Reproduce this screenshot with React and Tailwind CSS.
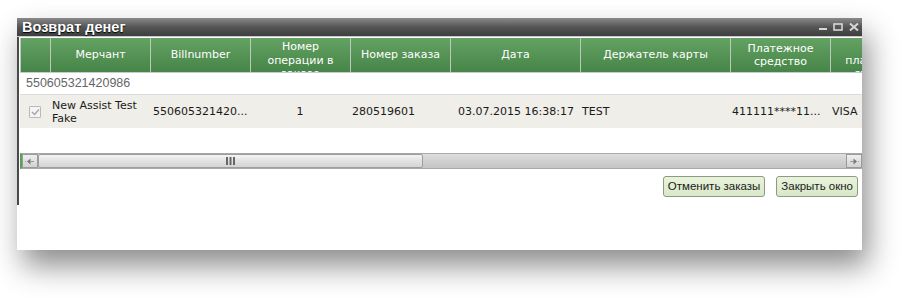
import React from 'react';

const cols = [
  { w: 30, label: '' },
  { w: 100, label: 'Мерчант' },
  { w: 100, label: 'Billnumber' },
  { w: 100, label: 'Номер операции в заказе', tall: true },
  { w: 100, label: 'Номер заказа' },
  { w: 130, label: 'Дата' },
  { w: 150, label: 'Держатель карты' },
  { w: 100, label: 'Платежное средство' },
  { w: 100, label: 'Тип платежного средства', tall: true },
];

function WindowControls() {
  return (
    <div className="flex items-end gap-[6px] pr-[3px] pb-[5px]">
      <svg width="8" height="3" viewBox="0 0 8 3">
        <rect x="0" y="0" width="8" height="2" fill="#d6d6d6" />
      </svg>
      <svg width="10" height="8" viewBox="0 0 10 8">
        <rect x="1" y="1" width="8" height="6" fill="none" stroke="#d6d6d6" strokeWidth="1.6" />
      </svg>
      <svg width="10" height="8" viewBox="0 0 10 8">
        <path d="M1 0.5 L9 7.5 M9 0.5 L1 7.5" stroke="#d6d6d6" strokeWidth="2" />
      </svg>
    </div>
  );
}

function Checkbox() {
  return (
    <div className="w-[12px] h-[12px] border border-[#b9b9b9] bg-[#f4f4f4] rounded-[1px] flex items-center justify-center">
      <svg width="9" height="8" viewBox="0 0 9 8">
        <path d="M1 4 L3.5 6.5 L8 1.5" fill="none" stroke="#a8a8a8" strokeWidth="1.5" />
      </svg>
    </div>
  );
}

function ScrollArrow({ dir }) {
  return (
    <div className="w-[16px] h-[14px] border border-[#9a9a9a] bg-gradient-to-b from-[#efefef] to-[#d2d2d2] flex items-center justify-center">
      <svg width="10" height="7" viewBox="0 0 10 7">
        {dir === 'left' ? (
          <>
            <path d="M2 3.5 L5.5 0.5 L5.5 6.5 Z" fill="#777" />
            <rect x="5" y="3" width="4" height="1" fill="#999" />
            <rect x="0" y="3" width="1" height="1" fill="#999" />
          </>
        ) : (
          <>
            <path d="M8 3.5 L4.5 0.5 L4.5 6.5 Z" fill="#777" />
            <rect x="1" y="3" width="4" height="1" fill="#999" />
            <rect x="9" y="3" width="1" height="1" fill="#999" />
          </>
        )}
      </svg>
    </div>
  );
}

export default function App() {
  const font = { fontFamily: '"DejaVu Sans", Verdana, sans-serif' };
  const btn =
    'h-[21px] px-[4px] text-[11.5px] text-[#1a1a1a] bg-gradient-to-b from-[#e9f3dc] to-[#d9e8c8] border border-[#8d9a82] rounded-[3px]';

  return (
    <div className="w-[910px] h-[298px] bg-white overflow-hidden pt-[18px] pl-[17px]">
      <div className="w-[845px] h-[232px] bg-white flex flex-col shadow-[6px_16px_28px_rgba(0,0,0,0.45)]">
        {/* Title bar */}
        <div className="h-[19px] flex items-stretch justify-between bg-gradient-to-b from-[#8a8a8a] via-[#555555] to-[#3e3e3e] border-b border-[#c9c9c9]">
          <div
            className="pl-[5px] text-white font-bold text-[14.5px] leading-[19px] [text-shadow:0_1px_1px_#000]"
            style={{ fontFamily: '"Liberation Sans", Arial, sans-serif' }}
          >
            Возврат денег
          </div>
          <WindowControls />
        </div>

        {/* Body */}
        <div className="flex flex-1">
          <div className="w-[2px] h-[168px] bg-[#4a4a4a]" />
          <div className="flex-1 flex flex-col min-w-0 pt-[1px] pl-[1px]">
            {/* Grid */}
            <div className="overflow-hidden">
              <div className="w-max" style={font}>
                {/* Header */}
                <div className="flex h-[35px] bg-gradient-to-b from-[#64a264] to-[#478447] border-b border-[#c2ccd2]">
                  {cols.map((c, i) => (
                    <div
                      key={i}
                      className={`shrink-0 border-l border-[#bcc8bc] flex justify-center text-center text-white text-[11px] leading-[13.5px] px-[4px] overflow-hidden ${c.tall ? 'items-start pt-[2px]' : 'items-center'}`}
                      style={{ width: c.w }}
                    >
                      {c.label}
                    </div>
                  ))}
                </div>

                {/* Group row */}
                <div className="h-[22px] flex items-center pl-[6px] border-b border-[#dcdcdc] text-[#666666] text-[12.5px]" style={{ fontFamily: '"Liberation Sans", Arial, sans-serif' }}>
                  550605321420986
                </div>

                {/* Data row */}
                <div className="flex h-[33px] bg-[#efeee8] text-[11px] leading-[13px] text-[#1a1a1a]">
                  <div className="w-[30px] shrink-0 flex items-center justify-center">
                    <Checkbox />
                  </div>
                  <div className="w-[100px] shrink-0 flex items-center pl-[2px]">
                    <span>
                      New Assist Test
                      <br />
                      Fake
                    </span>
                  </div>
                  <div className="w-[100px] shrink-0 flex items-center pl-[3px]">550605321420...</div>
                  <div className="w-[100px] shrink-0 flex items-center justify-center">1</div>
                  <div className="w-[100px] shrink-0 flex items-center pl-[2px]">280519601</div>
                  <div className="w-[130px] shrink-0 flex items-center pl-[8px] whitespace-nowrap">03.07.2015 16:38:17</div>
                  <div className="w-[150px] shrink-0 flex items-center pl-[2px]">TEST</div>
                  <div className="w-[100px] shrink-0 flex items-center pl-[2px]">411111****11...</div>
                  <div className="w-[100px] shrink-0 flex items-center pl-[2px]">VISA</div>
                </div>

                <div className="h-[25px]" />
              </div>
            </div>

            {/* Horizontal scrollbar */}
            <div className="h-[16px] flex items-center border-y border-[#a8a8a8] bg-gradient-to-b from-[#dedede] via-[#d0d0d0] to-[#c4c4c4] border-l-2 border-l-[#5aa05a]">
              <ScrollArrow dir="left" />
              <div className="w-[385px] h-[14px] border border-[#9e9e9e] rounded-[2px] bg-gradient-to-b from-[#f4f4f4] via-[#e2e2e2] to-[#d4d4d4] flex items-center justify-center">
                <svg width="9" height="8" viewBox="0 0 9 8">
                  <rect x="0" y="0" width="2" height="8" fill="#666" />
                  <rect x="3.5" y="0" width="2" height="8" fill="#666" />
                  <rect x="7" y="0" width="2" height="8" fill="#666" />
                </svg>
              </div>
              <div className="flex-1" />
              <ScrollArrow dir="right" />
            </div>

            {/* Buttons */}
            <div className="flex justify-end gap-[11px] pt-[7px] pr-[4px]" style={{ fontFamily: '"Liberation Sans", Arial, sans-serif' }}>
              <button className={btn}>Отменить заказы</button>
              <button className={btn}>Закрыть окно</button>
            </div>
          </div>
        </div>
      </div>
    </div>
  );
}
